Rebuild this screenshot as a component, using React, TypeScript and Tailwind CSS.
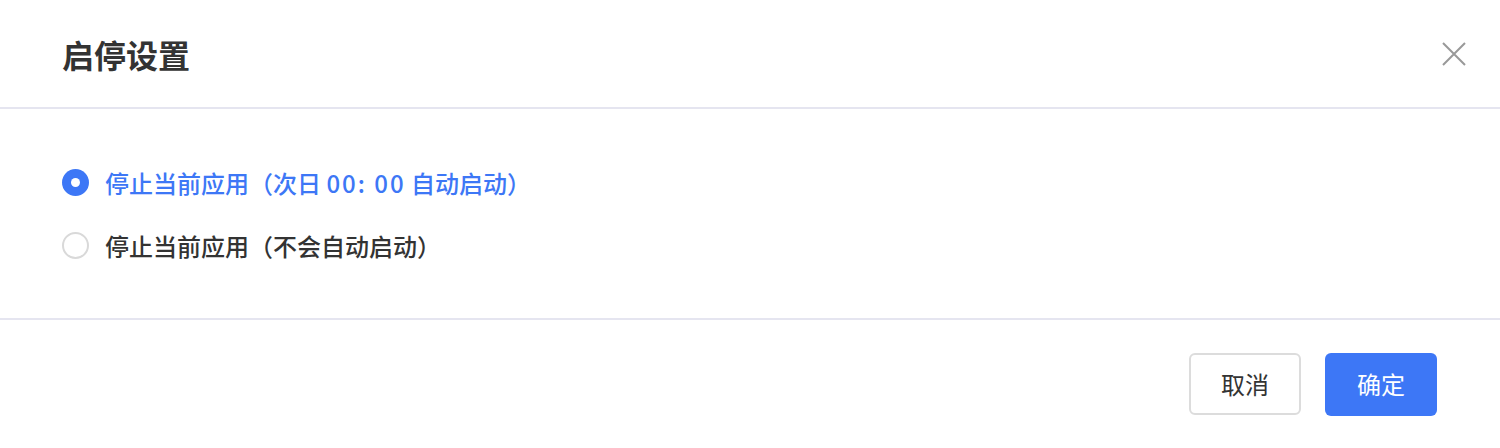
const font = { fontFamily: '"Noto Sans CJK SC", "Noto Sans", sans-serif' };

interface Option {
  id: string;
  before: string;
  time?: string;
  after?: string;
}

const options: Option[] = [
  { id: "next-day", before: "停止当前应用（次日 ", time: "00: 00", after: " 自动启动）" },
  { id: "manual", before: "停止当前应用（不会自动启动）" },
];

function Radio({ checked }: { checked: boolean }) {
  return checked ? (
    <span className="flex h-[27px] w-[27px] shrink-0 items-center justify-center rounded-full bg-[#3d77f6]">
      <span className="h-[9px] w-[9px] rounded-full bg-white" />
    </span>
  ) : (
    <span className="h-[27px] w-[27px] shrink-0 rounded-full border-2 border-[#d9d9d9] bg-white" />
  );
}

export default function App() {
  const selected = "next-day";

  return (
    <div style={font} className="flex h-[448px] w-[1500px] flex-col bg-white">
      {/* Header */}
      <div className="flex h-[109px] items-center justify-between border-b-2 border-[#e5e5f0] pl-[62px] pr-[34px]">
        <h2 className="text-[32px] font-bold text-[#333333]">启停设置</h2>
        <svg width="24" height="24" viewBox="0 0 24 24" fill="none" stroke="#999999" strokeWidth={2}>
          <path d="M1 1L23 23M23 1L1 23" />
        </svg>
      </div>

      {/* Body */}
      <div className="flex h-[211px] flex-col gap-[36px] border-b-2 border-[#e5e5f0] pl-[62px] pt-[60px]">
        {options.map((opt) => {
          const checked = opt.id === selected;
          return (
            <label key={opt.id} className="flex h-[27px] items-center gap-[16px]">
              <Radio checked={checked} />
              <span
                className={
                  checked
                    ? "whitespace-pre text-[24px] font-medium text-[#3d77f6]"
                    : "whitespace-pre text-[24px] font-medium text-[#333333]"
                }
              >
                {opt.before}
                {opt.time && <span className="tracking-[2px]">{opt.time}</span>}
                {opt.after}
              </span>
            </label>
          );
        })}
      </div>

      {/* Footer */}
      <div className="flex flex-1 items-center justify-end gap-[24px] pr-[63px]">
        <button className="h-[62px] w-[112px] rounded-[6px] border-2 border-[#dcdcdc] bg-white text-[24px] text-[#333333]">
          取消
        </button>
        <button className="h-[63px] w-[112px] rounded-[6px] bg-[#3d77f6] text-[24px] text-white">
          确定
        </button>
      </div>
    </div>
  );
}
